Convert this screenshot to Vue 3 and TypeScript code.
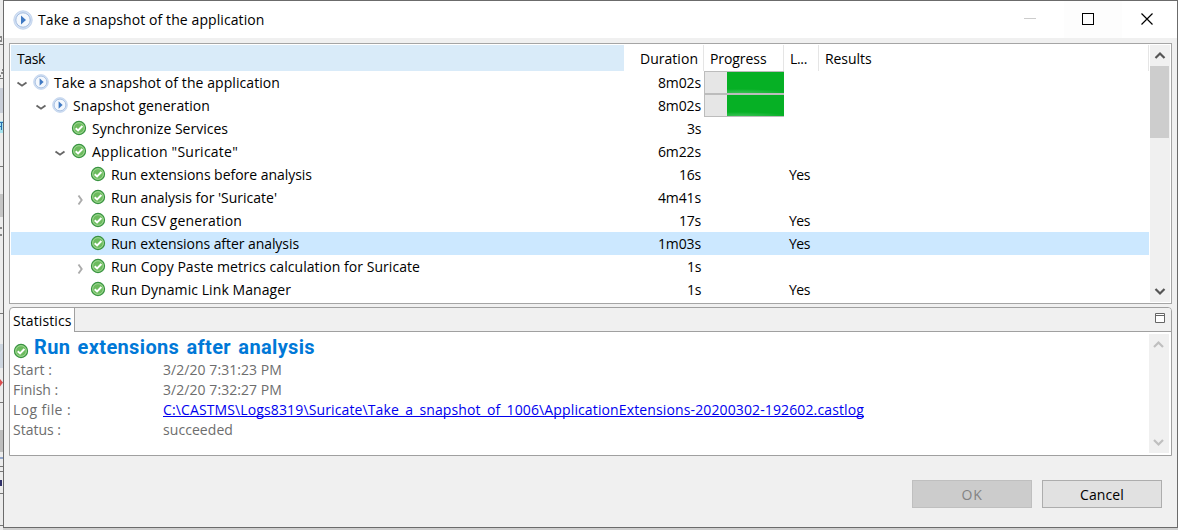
<script setup lang="ts">
type Status = 'running' | 'done'
interface Task {
  name: string
  width: number
  level: number
  status: Status
  toggle?: 'open' | 'closed'
  duration: string
  durationWidth: number
  progress?: boolean
  log?: boolean
  selected?: boolean
}

const tasks: Task[] = [
  { name: 'Take a snapshot of the application', width: 226, level: 0, status: 'running', toggle: 'open', duration: '8m02s', durationWidth: 43, progress: true },
  { name: 'Snapshot generation', width: 137, level: 1, status: 'running', toggle: 'open', duration: '8m02s', durationWidth: 43, progress: true },
  { name: 'Synchronize Services', width: 136, level: 2, status: 'done', duration: '3s', durationWidth: 14 },
  { name: 'Application "Suricate"', width: 146, level: 2, status: 'done', toggle: 'open', duration: '6m22s', durationWidth: 43 },
  { name: 'Run extensions before analysis', width: 201, level: 3, status: 'done', duration: '16s', durationWidth: 22, log: true },
  { name: "Run analysis for 'Suricate'", width: 166, level: 3, status: 'done', toggle: 'closed', duration: '4m41s', durationWidth: 43 },
  { name: 'Run CSV generation', width: 131, level: 3, status: 'done', duration: '17s', durationWidth: 22, log: true },
  { name: 'Run extensions after analysis', width: 188, level: 3, status: 'done', duration: '1m03s', durationWidth: 43, log: true, selected: true },
  { name: 'Run Copy Paste metrics calculation for Suricate', width: 309, level: 3, status: 'done', toggle: 'closed', duration: '1s', durationWidth: 14 },
  { name: 'Run Dynamic Link Manager', width: 180, level: 3, status: 'done', duration: '1s', durationWidth: 14, log: true },
]

const stats = [
  { label: 'Start :', labelWidth: 39, value: '3/2/20 7:31:23 PM', width: 119 },
  { label: 'Finish :', labelWidth: 45, value: '3/2/20 7:32:27 PM', width: 119 },
  { label: 'Log file :', labelWidth: 58, value: 'C:\\CASTMS\\Logs8319\\Suricate\\Take_a_snapshot_of_1006\\ApplicationExtensions-20200302-192602.castlog', width: 701, link: true },
  { label: 'Status :', labelWidth: 48, value: 'succeeded', width: 70 },
]

// Tracks a label so that it occupies the given width.
const vFit = {
  mounted(el: HTMLElement, { value }: { value: number }) {
    const count = (el.textContent ?? '').trim().length
    const natural = el.getBoundingClientRect().width
    el.style.letterSpacing = `${(value - natural) / count}px`
  },
}
</script>

<template>
  <div class="screen">
    <svg class="behind" width="1178" height="530" viewBox="0 0 1178 530">
      <rect width="1178" height="530" fill="#cfcfcf" />
      <rect width="3" height="530" fill="#ececec" />
      <path d="M0 44.500h3M0 78.500h3M0 166.500h3M0 313.500h3M0 402.500h3M0 466.500h3M0 471.500h3M0 493.500h3M0 525.500h3" stroke="#777" />
      <path d="M0 37h2M1 39h1M0 41h2M2 70h1M1 73h2M0 76h1M0 205h2M0 211h2M0 228h2M0 235h2" stroke="#222" />
      <rect y="88" width="3" height="25" fill="#c9ced8" />
      <rect y="121" width="3" height="12" fill="#a5e3ee" />
      <rect y="194" width="3" height="23" fill="#c5c5c5" />
      <path d="M0 122.500h3M0 126.500h2M1.500 122v8" stroke="#2a6fb0" />
      <rect y="344" width="3" height="24" fill="#cdd5df" />
      <path d="M0 379l3 3.500-3 4z" fill="#dc4d4f" />
      <rect y="430" width="3" height="22" fill="#bdbdbd" />
      <rect y="457" width="3" height="2" fill="#91a5ca" />
      <rect y="480" width="2" height="6" fill="#30306a" />
    </svg>

    <div class="dialog">
      <header class="titlebar">
        <svg class="app-icon" width="20" height="20" viewBox="0 0 20 20">
          <circle cx="10" cy="10" r="9.200" fill="#d3e1f5" stroke="#c3d4ec" stroke-width="1" />
          <circle cx="10" cy="10" r="7.200" fill="#f4f8fd" stroke="#a3bcdf" stroke-width="1" />
          <path d="M8 5.500l5 4.500-5 4.500z" fill="#3f79c3" />
        </svg>
        <span v-fit="226.500" class="t title">Take a snapshot of the application</span>
        <div class="window-buttons">
          <svg width="59" height="37" viewBox="0 0 59 37"><path d="M19 17.500h12" stroke="#ccc" /></svg>
          <svg class="maximize" width="58" height="37" viewBox="0 0 58 37"><rect x="18.500" y="12.500" width="11" height="11" fill="none" stroke="#000" /></svg>
          <svg width="55" height="37" viewBox="0 0 55 37"><path d="M19.500 12.500l11 11M30.500 12.500l-11 11" stroke="#000" stroke-width="1.200" /></svg>
        </div>
      </header>

      <section class="tasks">
        <div class="tree">
          <div class="row head">
            <div class="cell task"><span v-fit="28" class="t">Task</span></div>
            <div class="cell duration"><span v-fit="58" class="t">Duration</span></div>
            <div class="cell"><span v-fit="56.500" class="t">Progress</span></div>
            <div class="cell"><span v-fit="17" class="t">L...</span></div>
            <div class="cell results"><span v-fit="46.500" class="t">Results</span></div>
          </div>
          <div v-for="(task, i) in tasks" :key="i" class="row" :class="{ selected: task.selected }">
            <div class="name">
              <i v-for="n in task.level" :key="n" class="indent" />
              <span class="toggle">
                <svg v-if="task.toggle === 'open'" class="open" width="12" height="8" viewBox="0 0 12 8"><path d="M1.500 2.500l4.500 3.200 4.500-3.200" fill="none" stroke="#666" stroke-width="1.900" /></svg>
                <svg v-else-if="task.toggle === 'closed'" class="closed" width="8" height="12" viewBox="0 0 8 12"><path d="M1.500 1.500L4.700 6 1.500 10.500" fill="none" stroke="#ababab" stroke-width="1.900" /></svg>
              </span>
              <svg v-if="task.status === 'running'" class="icon" width="16" height="16" viewBox="0 0 16 16">
                <circle cx="8" cy="8" r="7.400" fill="#d3e1f5" stroke="#c3d4ec" stroke-width=".8" />
                <circle cx="8" cy="8" r="5.900" fill="#f4f8fd" stroke="#a3bcdf" stroke-width=".9" />
                <path d="M6.600 4.200l4 3.800-4 3.800z" fill="#3f79c3" />
              </svg>
              <svg v-else class="icon" width="16" height="16" viewBox="0 0 16 16">
                <circle cx="8" cy="8" r="6.600" fill="#6cbb5e" stroke="#399342" stroke-width="1.100" />
                <circle cx="8" cy="8" r="5.300" fill="none" stroke="#a5d99a" stroke-width=".9" />
                <path d="M4.700 8.200l2.400 2.300 4.300-4.500" fill="none" stroke="#fff" stroke-width="1.900" />
              </svg>
              <span v-fit="task.width" class="t label">{{ task.name }}</span>
            </div>
            <div class="time"><span v-fit="task.durationWidth" class="t">{{ task.duration }}</span></div>
            <div class="progress"><div v-if="task.progress" class="bar"><div class="fill" /></div></div>
            <div class="log"><span v-if="task.log" v-fit="21" class="t">Yes</span></div>
          </div>
        </div>
        <div class="scrollbar">
          <svg width="20" height="21" viewBox="0 0 20 21"><path d="M5.500 13l4.500-4.500 4.500 4.500" fill="none" stroke="#555" stroke-width="2.200" /></svg>
          <div class="thumb" />
          <svg class="down" width="20" height="21" viewBox="0 0 20 21"><path d="M5.500 8l4.500 4.500L14.500 8" fill="none" stroke="#555" stroke-width="2.200" /></svg>
        </div>
      </section>

      <section class="statistics">
        <div class="tabs">
          <div class="tab"><span v-fit="58.500" class="t">Statistics</span></div>
          <div class="strip">
            <svg width="11" height="10" viewBox="0 0 11 10"><path d="M.5.500h9v9h-9zM.5 2.500h9" fill="#fff" stroke="#666" /></svg>
          </div>
        </div>
        <div class="pane">
          <div class="details">
            <div class="heading">
              <svg class="icon" width="16" height="16" viewBox="0 0 16 16">
                <circle cx="8" cy="8" r="6.600" fill="#6cbb5e" stroke="#399342" stroke-width="1.100" />
                <circle cx="8" cy="8" r="5.300" fill="none" stroke="#a5d99a" stroke-width=".9" />
                <path d="M4.700 8.200l2.400 2.300 4.300-4.500" fill="none" stroke="#fff" stroke-width="1.900" />
              </svg>
              <span v-fit="281" class="t big">Run extensions after analysis</span>
            </div>
            <div v-for="row in stats" :key="row.label" class="stat">
              <div class="key"><span v-fit="row.labelWidth" class="t">{{ row.label }}</span></div>
              <span v-fit="row.width" class="t" :class="{ link: row.link }">{{ row.value }}</span>
            </div>
          </div>
          <div class="scrollbar idle">
            <svg width="20" height="21" viewBox="0 0 20 21"><path d="M5 13l4.500-4.500L14 13" fill="none" stroke="#bfbfbf" stroke-width="2.200" /></svg>
            <svg class="down" width="20" height="21" viewBox="0 0 20 21"><path d="M5 8l4.500 4.500L14 8" fill="none" stroke="#bfbfbf" stroke-width="2.200" /></svg>
          </div>
        </div>
      </section>

      <footer class="actions">
        <button class="button disabled" disabled><span v-fit="21" class="t">OK</span></button>
        <button class="button"><span v-fit="44" class="t">Cancel</span></button>
      </footer>
    </div>
  </div>
</template>

<style>
body {
  margin: 0;
  overflow: hidden;
}
</style>

<style scoped>
.screen,
.screen * {
  box-sizing: border-box;
}
.screen {
  position: relative;
  width: 1178px;
  height: 530px;
  padding-left: 3px;
  overflow: hidden;
  font: 14px/20px "Open Sans", "Noto Sans", sans-serif;
  color: #000;
}
.behind {
  position: absolute;
  inset: 0;
}
.t {
  display: inline-block;
  white-space: nowrap;
}
.dialog {
  position: relative;
  width: 1175px;
  height: 528px;
  border: 1px solid #6b6b6b;
  background: #f0f0f0;
}
.titlebar {
  display: flex;
  align-items: center;
  height: 37px;
  padding-left: 9px;
  background: #fff;
}
.app-icon {
  margin-right: 5px;
}
.window-buttons {
  display: flex;
  margin-left: auto;
  height: 37px;
}
.window-buttons svg {
  display: block;
}
.maximize {
  background: #fdfdfd;
}
.tasks {
  display: flex;
  justify-content: space-between;
  width: 1163px;
  height: 261px;
  margin: 5px 0 0 5px;
  padding: 1px;
  border: 1px solid #a5a5a5;
  background: #fff;
}
.tree {
  width: 1138px;
}
.row {
  display: grid;
  grid-template-columns: 613px 80px 80px 35px 330px;
  height: 23px;
}
.row.head {
  height: 26px;
}
.row.selected {
  background: #cce8ff;
}
.cell {
  padding: 4px 0 0 6px;
  border-right: 1px solid #e5e5e5;
}
.cell.task {
  background: #d9ebf9;
  border: 0;
}
.cell.duration {
  padding: 4px 5px 0 0;
  text-align: right;
}
.name {
  display: flex;
  align-items: center;
  padding-left: 5px;
}
.indent {
  width: 19px;
}
.toggle {
  display: flex;
  width: 17px;
  height: 8px;
}
.open {
  margin-top: 1px;
}
.closed {
  margin: 0 0 0 4px;
}
.icon {
  flex: none;
  margin-top: -1px;
}
.label {
  margin-left: 5px;
}
.time {
  padding: 2px 3px 0 0;
  text-align: right;
}
.bar {
  display: flex;
  height: 23px;
  padding-left: 22px;
  border: 1px solid #bcbcbc;
  border-right: 0;
  background: #e6e6e6;
}
.fill {
  flex: 1;
  background: radial-gradient(ellipse 48px 4px at 12px 100%, #38c152 0%, #1cb83a 60%, #06b025 100%);
}
.log {
  padding: 2px 0 0 5px;
}
.scrollbar {
  display: flex;
  flex-direction: column;
  width: 20px;
  height: 257px;
  background: #f0f0f0;
}
.thumb {
  width: 19px;
  height: 72px;
  background: #cdcdcd;
}
.scrollbar svg {
  display: block;
}
.down {
  margin-top: auto;
}
.statistics {
  width: 1163px;
  height: 149px;
  margin: 3px 0 0 5px;
  border: 1px solid #a0a0a0;
  border-radius: 4px 4px 0 0;
  background: #fff;
}
.tabs {
  display: flex;
  height: 24px;
}
.tab {
  width: 64px;
  padding: 3px 0 0 3px;
}
.strip {
  display: flex;
  flex: 1;
  justify-content: flex-end;
  padding: 5px 5px 0 0;
  border-left: 1px solid #a0a0a0;
  border-bottom: 1px solid #a0a0a0;
  border-top-right-radius: 3px;
  background: #f0f0f0;
}
.pane {
  display: flex;
  justify-content: space-between;
}
.details {
  color: #6d6d6d;
}
.heading {
  display: flex;
  height: 28px;
  padding-left: 3px;
}
.heading .icon {
  margin-top: 11px;
}
.big {
  margin: 5px 0 0 5px;
  color: #0078d7;
  font: bold 20px/20px Roboto, "Liberation Sans", sans-serif;
  word-spacing: 2px;
}
.stat {
  display: flex;
  height: 20px;
  padding-left: 3px;
}
.key {
  width: 150px;
}
.link {
  color: #00e;
  text-decoration: underline;
  text-decoration-skip-ink: none;
  text-underline-offset: 1px;
  text-decoration-thickness: 1px;
}
.idle {
  height: 119px;
  margin: 2px 2px 0 0;
}
.actions {
  display: flex;
  justify-content: flex-end;
  gap: 10px;
  padding: 24px 15px 0 0;
}
.button {
  width: 120px;
  height: 28px;
  padding: 2px 0 0;
  border: 1px solid #adadad;
  border-radius: 0;
  background: #e1e1e1;
  color: #000;
  font: inherit;
}
.button.disabled {
  border-color: #bfbfbf;
  background: #ccc;
  color: #838383;
}
</style>
